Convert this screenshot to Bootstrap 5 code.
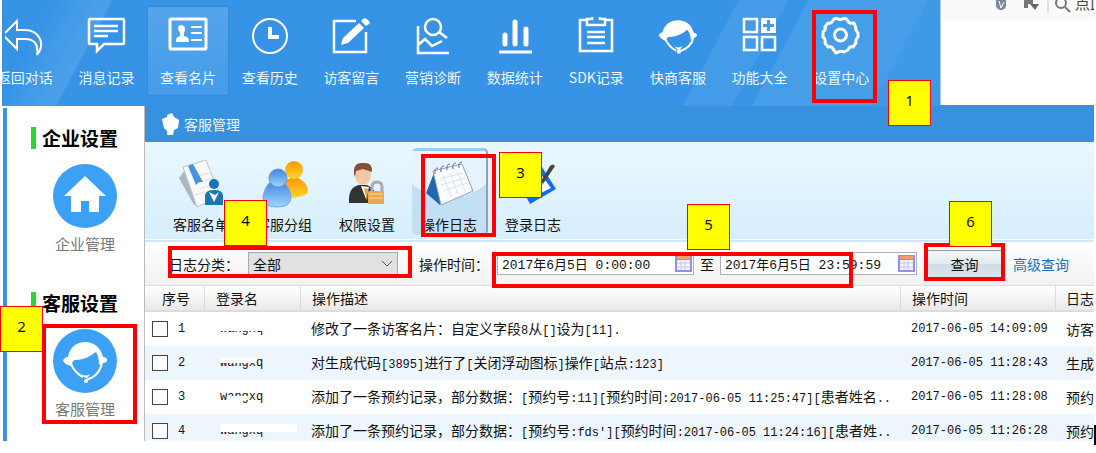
<!DOCTYPE html>
<html lang="zh-CN">
<head>
<meta charset="utf-8">
<meta name="viewport" content="width=device-width, initial-scale=1">
<title>客服管理 - 操作日志</title>
<link href="https://cdn.jsdelivr.net/npm/bootstrap@5.3.0/dist/css/bootstrap.min.css" rel="stylesheet">
<style>
:root { --cjk: "Noto Sans CJK SC", sans-serif; --mono: "Liberation Mono", "Noto Sans CJK SC", monospace; --red: #f00; }
body { font-family: var(--cjk); font-size: 14px; line-height: 20px; color: #111; background: #fff; overflow: hidden; }
a { text-decoration: none; color: inherit; }
.shell { padding: 0 2px 0 2px; min-height: 100vh; }
.console { height: calc(100vh - 12px); overflow: hidden; }

/* top banner */
.topbar { height: 106px; background: #3693e6; }
.banner { flex: 1 1 0; min-width: 0; overflow: hidden; padding: 6px 58px 0 0;
  background: linear-gradient(118deg, transparent 74%, #449ce8 74.2%, #449ce8 79%, #3a95e6 79.2%, #3a95e6 81%, #469ee9 81.2%, #469ee9 93%, #3f99e7 93.2%),
  linear-gradient(118deg, #3693e6 5%, #429be8 8%, #4ba0e9 11%, #3693e6 11.2%); }
.banner ul { margin: 0 0 0 -18px; }
.banner li { flex: 1 1 0; }
.banner a { display: flex; flex-direction: column; align-items: center; height: 90px; padding-top: 10px; color: #eef6fd; white-space: nowrap; border: 1px solid transparent; border-radius: 3px; }
.banner a.active { background: linear-gradient(#55a4eb, #459cea); border-color: #3489d4; }
.banner svg { width: 40px; height: 40px; margin-bottom: 10px; fill: none; stroke: #fff; stroke-width: 2; }
.banner .solid { fill: #fff; stroke: none; }
.corner { width: 154px; background: #fff; border-left: 1px solid #a8ccee; margin-bottom: 1px; }
.corner-strip { height: 20px; background: #fafafa; overflow: hidden; padding-left: 51px; }

/* side panel */
.side { width: 143px; flex: none; background: #fff; border-left: 1px solid #fff; border-right: 1px solid #bbb; padding-top: 2px; }
.side-rail { border-left: 4px solid #3b94e8; height: 100%; padding-left: 1px; background: #fff; }
.side h2 { font-size: 19px; line-height: 22px; font-weight: 700; color: #000; margin: 0; padding-left: 6px; border-left: 5px solid #30d430; height: 22px; }
.side section { padding: 19px 0 0 23px; height: 165px; }
.side section a { display: block; width: 108px; text-align: center; color: #777; font-size: 15px; line-height: 24px; }
.side svg { display: block; width: 64px; height: 64px; margin: 15px auto 4px; }

.titlebar { height: 36px; background: #3791df; color: #eaf5ff; padding-left: 16px; }
.tools { height: 98px; background: linear-gradient(#eaf8ff, #d6eefd); border-bottom: 1px solid #fff; padding: 6px 0 0 18px; gap: 7px; }
.tool { width: 76px; height: 87px; border: 0; background: none; padding: 8px 0 0; color: #111; white-space: nowrap; border-radius: 5px; }
.tool.active { background: linear-gradient(#9fcdf0 0 3px, transparent 3px), radial-gradient(ellipse 75% 60% at 50% 0, #e7f3fd 0 95%, #c3dff4 96%); border-right: 2px solid #8aa4b8; }
.tool svg { display: block; width: 52px; height: 52px; margin: 0 auto 4px; }
.filters { height: 45px; border-top: 2px solid #cfe7f8; padding-left: 24px; background: linear-gradient(#fff, #f1f1f1); overflow: hidden; }
.filters > * { flex: none; }
.filters label { width: 70px; }
.filters .till { width: auto; padding: 0 6px; }
.log-kind { width: 150px; height: 24px; margin: 0 21px 0 9px; padding: 0 4px; border: 1px solid #aaa; background: #e1e1e1; appearance: none; font-size: 14px; line-height: 20px; color: #111; border-radius: 0; }
.kind-wrap { position: relative; }
.kind-wrap svg { position: absolute; right: 26px; top: 8px; width: 12px; height: 8px; pointer-events: none; }
.when { position: relative; width: 197px; }
.when input { width: 100%; height: 23px; border: 1px solid #aeb2b8; padding: 0 4px; font: 13px/20px var(--mono); color: #111; background: #fff; display: block; }
.when svg { position: absolute; right: 2px; top: 3px; width: 17px; height: 17px; }
.go { width: 75px; height: 28px; margin: 0 11px 0 10px; border: 1px solid #8d9aa3; border-radius: 0; background: linear-gradient(#f3f6f8, #e3ebf0 48%, #cfdde6 52%, #d9e6ee); padding: 0; font-size: 14px; line-height: 20px; color: #111; }
.more { color: #1673b9; }

/* log list */
.log { table-layout: fixed; width: 100%; border-collapse: separate; border-spacing: 0; }
.log th, .log td { padding: 0 0 0 10px; white-space: nowrap; overflow: hidden; font-weight: 400; }
.log th { height: 27px; border-top: 1px solid #ddd; border-bottom: 2px solid #dcdcdc; background: linear-gradient(#fff, #e9e9e9); padding-left: 11px; border-right: 1px solid #ddd; }
.log th:last-child { border-right: 0; padding-left: 10px; }
.log th:first-child { padding-left: 17px; }
.log td:first-child { padding-left: 7px; }
.log td { height: 34px; }
.log tr:nth-child(even) td { background: #edf5fd; }
.log input { appearance: none; width: 16px; height: 16px; border: 1px solid #444; background: #fff; margin: 0 10px 0 0; vertical-align: middle; border-radius: 0; }
.fix { font: 12px/20px var(--mono); }
.log td.fix { vertical-align: middle; }
.uname { position: relative; display: inline-block; padding-left: 5px; vertical-align: middle; }
.uname::after { content: ""; position: absolute; left: 5px; background: #fff; width: 44px; height: 8px; top: 4px; }
.uname.low::after { width: 77px; top: 3px; }
.uname.gap::after { width: 20px; left: 13px; top: 9px; height: 4px; }
.uname.mid::after { width: 36px; top: 5px; height: 5px; }

/* numbered call-outs over the window */
.frame-red { position: absolute; border: 4px solid var(--red); pointer-events: none; }
.note { position: absolute; width: 43px; height: 46px; background: #ff0; border: 1px solid var(--red); text-align: center; font: 15px/39px "Noto Sans", sans-serif; color: #111; }
.f1 { left: 812px; top: 10px; width: 65px; height: 93px; }
.f2 { left: 42px; top: 324px; width: 95px; height: 100px; }
.f3 { left: 421px; top: 154px; width: 75px; height: 83px; }
.f4 { left: 168px; top: 246px; width: 244px; height: 32px; }
.f5 { left: 492px; top: 252px; width: 361px; height: 36px; }
.f6 { left: 924px; top: 243px; width: 81px; height: 38px; }
.n1 { left: 888px; top: 80px; }
.n2 { left: 0; top: 306px; }
.n3 { left: 499px; top: 152px; }
.n4 { left: 224px; top: 200px; }
.n5 { left: 687px; top: 204px; }
.n6 { left: 949px; top: 201px; }
.caret { position: absolute; right: 0; top: 425px; width: 2px; height: 20px; background: #000; }
</style>
</head>
<body>
<div class="shell position-relative">
<div class="console d-flex flex-column">
  <header class="topbar d-flex flex-shrink-0">
    <nav class="banner">
      <ul class="d-flex list-unstyled">
        <li><a href="#"><svg viewBox="0 0 40 40"><path d="M-2 18 12 4v9h8c12 0 22 12 12 25 2-12-4-16-12-16h-8v10z"/></svg>返回对话</a></li>
        <li><a href="#"><svg viewBox="0 0 40 40"><path stroke-width="2.500" d="M4 2h33a1 1 0 0 1 1 1v23a1 1 0 0 1-1 1H18l-7 7v-7H4a1 1 0 0 1-1-1V3a1 1 0 0 1 1-1zM8 9h24M8 14h24M8 19h14"/></svg>消息记录</a></li>
        <li><a href="#" class="active"><svg viewBox="0 0 40 40"><rect x="2" y="2" width="36" height="30" rx="1" stroke-width="3"/><path class="solid" d="M13 8c4 0 5 4 3 8v3c4 1 5 2 5 6H8c0-4 1-5 4-6v-3c-3-4-2-8 1-8z"/><path d="M23 10h11M23 16h11M23 23h11"/></svg>查看名片</a></li>
        <li><a href="#"><svg viewBox="0 0 40 40"><circle cx="20" cy="19" r="17"/><path stroke-width="4" d="M20 10v10h9"/></svg>查看历史</a></li>
        <li><a href="#"><svg viewBox="0 0 40 40"><path stroke-width="2.500" d="M25 4H3v31h32V15"/><path class="solid" d="m10 28 2-7L28 6l5 5-16 15zM30 4l2-2q2-2 5 1t1 4l-3 2z"/></svg>访客留言</a></li>
        <li><a href="#"><svg viewBox="0 0 40 40"><path stroke-width="2.500" d="M5 9v27h31M5 28l7-6 7 7 10-5"/><circle cx="20" cy="10" r="8" stroke-width="2.500"/><path stroke-width="2.500" d="m26 15 8 6"/></svg>营销诊断</a></li>
        <li><a href="#"><svg viewBox="0 0 40 40"><path stroke-width="5" stroke-linecap="round" d="M10 18v9M20 5v22M31 12v15"/><path stroke-width="3" d="M4 35h33"/></svg>数据统计</a></li>
        <li><a href="#"><svg viewBox="0 0 40 40"><path stroke-width="2.500" d="M10 3H4v31h32V3h-6M11 8V2h5q0-5 4-5t4 5h5v6zM11 15h18M11 20h18M11 26h18"/></svg>SDK记录</a></li>
        <li><a href="#"><svg viewBox="0 0 44 40"><path class="solid" d="M5 15C8-3 36-3 39 15q4 1 4 3t-4 3l-3 2q0-7-4-11l-5 4q-7 4-15 4-3 0-3 5-5-2-8-6 0-4 4-4z"/><path d="M8 22q4 9 12 13M39 20q-2 12-16 16"/><circle class="solid" cx="23" cy="36" r="2.500"/><path class="solid" d="M18 30q4 3 9 0-2 4-4 4t-5-4z"/></svg>快商客服</a></li>
        <li><a href="#"><svg viewBox="0 0 40 40"><path stroke-width="2.500" d="M4 2h13v13H4zM4 20h13v13H4zM22 20h13v13H22z"/><path class="solid" fill-rule="evenodd" d="M21 1h15v15H21zM27 3v4h-4v3h4v4h3v-4h4V7h-4V3z"/></svg>功能大全</a></li>
        <li><a href="#"><svg viewBox="0 0 40 40"><path stroke-width="3" stroke-linejoin="round" d="M15 1q4 3 9 0l3 3q1 3 6 2l2 5q-1 2 2 5v4q-3 3-2 6l-3 4q-4-1-5 3l-4 2q-3-2-8 1l-3-4q-1-3-5-2l-3-4q1-4-2-6v-5q3-2 2-5l3-4q4 1 5-3z"/><circle cx="19.500" cy="18" r="6" stroke-width="3"/></svg>设置中心</a></li>
      </ul>
    </nav>
    <aside class="corner"><div class="corner-strip d-flex text-nowrap">
      <svg width="102" height="20" viewBox="0 0 102 20" fill="none" class="flex-shrink-0"><path d="M4 0h10v6q-1 4-5 4T4 6z" fill="#7c8799"/><path d="M7 1l2 7 3-6" stroke="#fff"/><path d="M32 0h9v4h-5v4h-4z" fill="#777"/><path d="M38 4h9l-4 6z" fill="#666"/><path d="M56 0v13" stroke="#ccc"/><circle cx="69" cy="3" r="5" stroke="#777" stroke-width="2"/><path d="m73 7 5 5" stroke="#777" stroke-width="2"/><text x="83" y="9" font-size="15" fill="#444">点此</text></svg>
    </div></aside>
  </header>

  <div class="d-flex flex-grow-1 overflow-hidden">
    <aside class="side"><div class="side-rail">
      <section><h2>企业设置</h2>
        <a href="#"><svg viewBox="0 0 64 64"><circle cx="32" cy="32" r="32" fill="#3ca1f5"/><path fill="#fff" d="M32 12 53 32h-7v16H36V37h-8v11H18V32h-7z"/></svg>企业管理</a></section>
      <section><h2>客服设置</h2>
        <a href="#"><svg viewBox="0 0 64 64"><circle cx="32" cy="32" r="32" fill="#3ca1f5"/><path fill="#fff" d="M15 28C18 8 46 8 50 28q4 0 4 3t-4 3l-4 2q0-8-3-13l-6 4q-7 4-15 4-3 0-3 6-7-1-9-5 1-4 5-4z"/><path d="M18 35q4 9 12 13M49 33q-2 14-16 18" fill="none" stroke="#fff" stroke-width="2"/><circle cx="33" cy="52" r="2" fill="#fff"/><path d="M28 45q4 3 9 0-2 4-4 4t-5-4z" fill="#fff"/></svg>客服管理</a></section>
    </div></aside>

    <main class="flex-grow-1 overflow-hidden">
      <div class="titlebar d-flex align-items-center">
        <svg class="me-1" width="19" height="22" viewBox="0 0 17 22" fill="#fff"><path d="M5 2 10 0l2 4 5 3-1 8-4 2-1 5H5v-4l-3-3-2-9 5-2z"/></svg><span>客服管理</span>
      </div>
      <div class="tools d-flex">
        <button type="button" class="tool"><svg viewBox="0 0 52 52"><path d="M4 20 13 8l15 38-9 1z" fill="#aab8c1"/><path d="M8 9 31 2l14 36-23 11z" fill="#fafafa" stroke="#bcc5ca"/><path d="M20 19l17-5M22 25l17-5M24 31l17-5M20 37l10-3" stroke="#ddd"/><path d="m13 8 5-2 10 18-4 0-3 3z" fill="#4b93d9"/><circle cx="39" cy="26" r="5" fill="#1976b5"/><path d="M30 47V37q1-5 9-5t9 5v10z" fill="#1976b5"/><path d="m34 34 5 10 5-10-4 3z" fill="#fff"/></svg>客服名单</button>
        <button type="button" class="tool"><svg viewBox="0 0 52 52"><defs><linearGradient id="gold" x2="0" y2="1"><stop stop-color="#ff9800"/><stop offset="1" stop-color="#ffd42d"/></linearGradient><linearGradient id="sky" x2="0" y2="1"><stop stop-color="#4285df"/><stop offset="1" stop-color="#9dd5ff"/></linearGradient></defs><path d="M22 38q0-15 11-18h7q10 5 10 13 0 6-20 7z" fill="url(#gold)"/><circle cx="36" cy="12" r="9" fill="url(#gold)"/><path d="M5 39q2-12 9-16h10q8 5 9 16 0 10-14 10T5 39z" fill="url(#sky)" stroke="#6fa9e8"/><circle cx="20" cy="20" r="9" fill="url(#sky)" stroke="#5d97de"/></svg>客服分组</button>
        <button type="button" class="tool"><svg viewBox="0 0 52 52"><path d="M8 45q-1-16 10-18h8q10 4 11 18z" fill="#333"/><path d="m20 28 5 13 3-12z" fill="#fff"/><path d="m23 30 3 13 1-12z" fill="#e9a52b"/><ellipse cx="22" cy="17" rx="8" ry="10" fill="#f4c7a4"/><path d="M13 16q-1-12 9-11 10-1 9 9l-9-3-7 2-1 6z" fill="#825035"/><path d="M31 34v-5q0-5 5-5t5 5v5" fill="none" stroke="#aaa" stroke-width="3"/><rect x="27" y="33" width="16" height="13" rx="1" fill="#eba750"/><path d="M28 36h14M28 40h14" stroke="#ffd99a"/></svg>权限设置</button>
        <button type="button" class="tool active"><svg viewBox="0 0 52 52"><path d="M11 15 3 35l14 12 3-5z" fill="#2167ad"/><path d="m10 13 29-7 11 27-32 14z" fill="#fbfcff" stroke="#86a4cb"/><path d="m16 21 24-6M18 27l24-7M20 33l24-8M20 17l8 22M27 15l8 21M34 13l8 20" stroke="#dde2f2"/><path d="M12 16q-1-6 3-6M18 14q-1-6 3-6M24 12q-1-6 3-6M30 11q-1-6 3-6M36 10q-1-6 3-6" fill="none" stroke="#667"/></svg>操作日志</button>
        <button type="button" class="tool"><svg viewBox="0 0 52 52"><path d="M7 16 35 9l14 22-26 15z" fill="#126cf2"/><path d="m14 18 18-4 12 16-20 10z" fill="#fff"/><path d="m31 28 12-20q3-3 5 0l-12 18z" fill="#444"/><path d="m31 28 2-5 4 3z" fill="#bbb"/></svg>登录日志</button>
      </div>
      <form class="filters d-flex align-items-center text-nowrap">
        <label for="kind">日志分类：</label>
        <div class="kind-wrap"><select id="kind" class="log-kind"><option>全部</option></select><svg viewBox="0 0 12 8" fill="none" stroke="#555"><path d="m1 1 5 5 5-5"/></svg></div>
        <label for="from" class="me-2">操作时间：</label>
        <div class="when"><input id="from" type="text" value="2017年6月5日 0:00:00"><svg viewBox="0 0 17 17"><rect width="17" height="17" fill="#8f8ff0"/><path d="M2 5h13v10H2z" fill="#f4f4ff"/><path d="M2 1h13v3H2z" fill="#f5a066"/><path d="M2 8h13M2 12h13M6 5v10M10 5v10" stroke="#c8c8f0"/></svg></div>
        <label for="to" class="till">至</label>
        <div class="when"><input id="to" type="text" value="2017年6月5日 23:59:59"><svg viewBox="0 0 17 17"><rect width="17" height="17" fill="#8f8ff0"/><path d="M2 5h13v10H2z" fill="#f4f4ff"/><path d="M2 1h13v3H2z" fill="#f5a066"/><path d="M2 8h13M2 12h13M6 5v10M10 5v10" stroke="#c8c8f0"/></svg></div>
        <button type="button" class="go">查询</button>
        <a href="#" class="more">高级查询</a>
      </form>
      <table class="log">
        <colgroup><col style="width:60px"><col style="width:96px"><col><col style="width:155px"><col style="width:38px"></colgroup>
        <thead><tr><th>序号</th><th>登录名</th><th>操作描述</th><th>操作时间</th><th>日志</th></tr></thead>
        <tbody>
          <tr><td class="fix"><input type="checkbox" id="r1"><label for="r1">1</label></td><td class="fix"><span class="uname">wangxq</span></td><td>修改了一条访客名片：自定义字段<span class="fix">8</span>从<span class="fix">[]</span>设为<span class="fix">[11].</span></td><td class="fix">2017-06-05 14:09:09</td><td>访客</td></tr>
          <tr><td class="fix"><input type="checkbox" id="r2"><label for="r2">2</label></td><td class="fix"><span class="uname mid">wangxq</span></td><td>对生成代码<span class="fix">[3895]</span>进行了<span class="fix">[</span>关闭浮动图标<span class="fix">]</span>操作<span class="fix">[</span>站点<span class="fix">:123]</span></td><td class="fix">2017-06-05 11:28:43</td><td>生成</td></tr>
          <tr><td class="fix"><input type="checkbox" id="r3"><label for="r3">3</label></td><td class="fix"><span class="uname gap">wangxq</span></td><td>添加了一条预约记录，部分数据：<span class="fix">[</span>预约号<span class="fix">:11][</span>预约时间<span class="fix">:2017-06-05 11:25:47][</span>患者姓名<span class="fix">..</span></td><td class="fix">2017-06-05 11:28:08</td><td>预约</td></tr>
          <tr><td class="fix"><input type="checkbox" id="r4"><label for="r4">4</label></td><td class="fix"><span class="uname low">wangxq</span></td><td>添加了一条预约记录，部分数据：<span class="fix">[</span>预约号<span class="fix">:fds'][</span>预约时间<span class="fix">:2017-06-05 11:24:16][</span>患者姓<span class="fix">..</span></td><td class="fix">2017-06-05 11:26:28</td><td>预约</td></tr>
        </tbody>
      </table>
    </main>
  </div>
</div>
<div class="frame-red f1"></div><div class="frame-red f2"></div><div class="frame-red f3"></div><div class="frame-red f4"></div><div class="frame-red f5"></div><div class="frame-red f6"></div>
<div class="note n1">1</div><div class="note n2">2</div><div class="note n3">3</div><div class="note n4">4</div><div class="note n5">5</div><div class="note n6">6</div>
<div class="caret"></div>
</div>
<script src="https://cdn.jsdelivr.net/npm/bootstrap@5.3.0/dist/js/bootstrap.bundle.min.js"></script>
</body>
</html>
